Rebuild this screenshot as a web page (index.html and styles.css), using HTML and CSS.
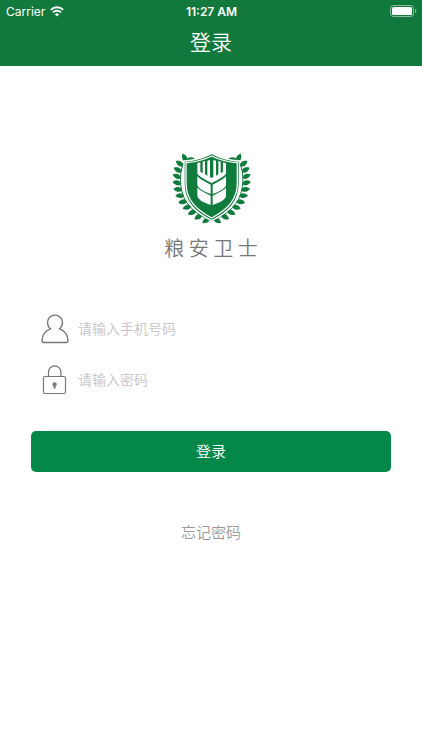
FILE: index.html
```html
<!DOCTYPE html>
<html lang="zh-CN">
<head>
<meta charset="utf-8">
<meta name="viewport" content="width=device-width, initial-scale=1">
<title>登录</title>
<link rel="stylesheet" href="styles.css">
</head>
<body>
<header class="top">
  <div class="status">
    <div class="carrier">
      <span>Carrier</span>
      <svg width="14" height="11" viewBox="0 0 14 11" fill="none" stroke="#fff" stroke-width="2" aria-hidden="true">
        <path d="M.8 3.9a8.8 8.8 0 0 1 12.4 0M3 6.4a5.7 5.7 0 0 1 8 0"/>
        <path d="M7 10.6 4.9 8.4a3 3 0 0 1 4.2 0Z" fill="#fff" stroke="none"/>
      </svg>
    </div>
    <time class="clock">11:27 AM</time>
    <svg class="battery" width="27" height="12" viewBox="0 0 27 12" aria-hidden="true">
      <rect x=".5" y=".5" width="23" height="11" rx="3" fill="none" stroke="#fff" stroke-opacity=".5"/>
      <rect x="2" y="2" width="20" height="8" rx="1.5" fill="#fff"/>
      <path d="M25 4v4q1.400-.5 1.400-2T25 4Z" fill="#fff" fill-opacity=".5"/>
    </svg>
  </div>
  <h1 class="title">登录</h1>
</header>
<main class="page">
  <svg class="logo" width="80" height="72" viewBox="30 21 240 216" fill="#0f7b3c" aria-hidden="true">
    <defs>
      <path id="leaf" d="M0 0C2-9 14-12 26-4C18 8 6 9 0 0Z"/>
      <g id="branch">
        <path d="M68 54C54 84 54 134 75 170Q100 208 150 226" fill="none" stroke="#0f7b3c" stroke-width="3"/>
        <use href="#leaf" transform="translate(76 46) rotate(-4)"/>
        <use href="#leaf" transform="translate(75 50) rotate(-104)"/>
        <use href="#leaf" transform="translate(66 63) rotate(-136)"/>
        <use href="#leaf" transform="translate(61 81) rotate(-142)"/>
        <use href="#leaf" transform="translate(59 99) rotate(-148)"/>
        <use href="#leaf" transform="translate(60 117) rotate(-156)"/>
        <use href="#leaf" transform="translate(63 135) rotate(-164)"/>
        <use href="#leaf" transform="translate(69 152) rotate(-172)"/>
        <use href="#leaf" transform="translate(78 169) rotate(180)"/>
        <use href="#leaf" transform="translate(90 184) rotate(172)"/>
        <use href="#leaf" transform="translate(105 198) rotate(166)"/>
        <use href="#leaf" transform="translate(123 210) rotate(160)"/>
        <use href="#leaf" transform="translate(146 220) rotate(156)"/>
      </g>
    </defs>
    <use href="#branch"/>
    <use href="#branch" transform="translate(304 0) scale(-1 1)"/>
    <path d="M152 25Q114 46 69 48V115C69 168 98 200 152 227C206 200 235 168 235 115V48Q190 46 152 25Z" stroke="#fff" stroke-width="4"/>
    <path d="M152 33Q116 51 75 53V115C75 163 103 193 152 219C201 193 229 163 229 115V53Q188 51 152 33Z" fill="none" stroke="#fff" stroke-width="4"/>
    <g fill="#fff">
      <path d="M109 55 118 52V80L125 85V50L132 48V88L139 92V47L147 45V96L152 99 157 96V45L165 47V92L172 88V48L179 50V85L186 80V52L195 55V86Q192 94 152 114Q112 94 109 86Z"/>
      <path d="M109 94Q115 102 149 119V147Q110 133 109 120Z"/>
      <path d="M195 94Q189 102 155 119V147Q194 133 195 120Z"/>
      <path d="M109 128Q116 136 149 152V180Q110 167 109 154Z"/>
      <path d="M195 128Q188 136 155 152V180Q194 167 195 154Z"/>
    </g>
  </svg>
  <h2 class="name">粮 安 卫 士</h2>
  <form class="form">
    <div class="field">
      <label for="phone" aria-label="手机号码">
        <svg width="28" height="30" viewBox="0 0 28 30" fill="none" stroke="#777" stroke-width="1.400" aria-hidden="true">
          <path d="M9.400 14.800C3.500 17 1.300 21.500 1 26.500Q1 28.500 3 28.500H25Q27 28.500 27 26.500C26.700 21.500 24.500 17 18.600 14.800C20.500 13.200 21.500 11.200 21.500 8.600A7.500 7.500 0 0 0 6.500 8.600C6.500 11.200 7.500 13.200 9.400 14.800Z"/>
        </svg>
      </label>
      <input id="phone" type="tel" placeholder="请输入手机号码">
    </div>
    <div class="field">
      <label for="password" aria-label="密码">
        <svg width="28" height="30" viewBox="0 0 28 30" fill="none" stroke="#777" stroke-width="1.200" aria-hidden="true">
          <rect x="2.500" y="11.500" width="22" height="17" rx="1.500"/>
          <path d="M7.500 11.500V7.200a6 6.200 0 0 1 12.400 0V11.500"/>
          <path d="M13.600 17.200a2.100 2.100 0 0 1 1 4v2.300h-2v-2.300a2.100 2.100 0 0 1 1-4Z" fill="#777" stroke="none"/>
        </svg>
      </label>
      <input id="password" type="password" placeholder="请输入密码">
    </div>
    <button class="submit" type="button">登录</button>
  </form>
  <a class="forgot" href="#">忘记密码</a>
</main>
</body>
</html>
```
FILE: styles.css
```css
* {
  box-sizing: border-box;
}

body {
  margin: 0;
  background: #fff;
  font-family: "Noto Sans CJK SC", sans-serif;
  font-weight: 350;
}

.top {
  padding-bottom: 9px;
  background: #10793b;
  color: #fff;
}

.status {
  display: grid;
  grid-template-columns: 1fr auto 1fr;
  align-items: center;
  height: 22px;
  padding: 0 5px 0 6px;
  font-family: Inter, sans-serif;
  font-size: 12px;
  font-weight: 400;
}

.carrier {
  display: flex;
  align-items: center;
  gap: 5px;
}

.clock {
  font-weight: 600;
}

.battery {
  justify-self: end;
}

.title {
  margin: 0;
  padding-top: 3px;
  font-size: 21px;
  font-weight: 350;
  line-height: 32px;
  text-align: center;
}

.page {
  display: flex;
  flex-direction: column;
  align-items: center;
  padding: 86px 31px 0;
}

.name {
  margin: 8px 0 0;
  color: #777;
  font-size: 20px;
  font-weight: 350;
  line-height: 32px;
}

.form {
  display: flex;
  flex-direction: column;
  align-self: stretch;
  gap: 11px;
  margin-top: 45px;
}

.field {
  display: flex;
  align-items: center;
  gap: 9px;
  height: 40px;
  padding-left: 10px;
}

.field label {
  display: flex;
}

.field input {
  flex: 1;
  min-width: 0;
  padding: 0 0 2px;
  border: 0;
  outline: 0;
  background: none;
  color: #333;
  font-family: inherit;
  font-size: 14px;
  font-weight: 350;
}

.field input::placeholder {
  color: #c4c4ca;
}

.submit {
  height: 41px;
  margin-top: 20px;
  padding: 0 0 2px;
  border: 0;
  border-radius: 5px;
  background: #04884a;
  color: #fff;
  font-family: inherit;
  font-size: 15px;
  font-weight: 350;
}

.forgot {
  margin-top: 48px;
  color: #999;
  font-size: 15px;
  line-height: 24px;
  text-decoration: none;
}
```
